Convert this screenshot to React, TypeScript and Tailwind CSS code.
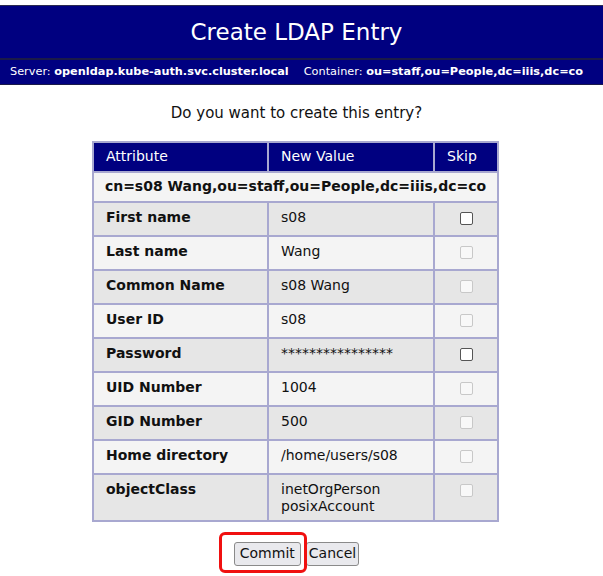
const rows = [
  { label: "First name", value: ["s08"], enabled: true },
  { label: "Last name", value: ["Wang"], enabled: false },
  { label: "Common Name", value: ["s08 Wang"], enabled: false },
  { label: "User ID", value: ["s08"], enabled: false },
  { label: "Password", value: ["****************"], enabled: true },
  { label: "UID Number", value: ["1004"], enabled: false },
  { label: "GID Number", value: ["500"], enabled: false },
  { label: "Home directory", value: ["/home/users/s08"], enabled: false },
  { label: "objectClass", value: ["inetOrgPerson", "posixAccount"], enabled: false },
];

function Check({ enabled }: { enabled: boolean }) {
  return (
    <span
      className={
        enabled
          ? "inline-block size-[13px] rounded-[2px] border border-[#555] bg-white"
          : "inline-block size-[13px] rounded-[2px] border border-[#c8c8c8] bg-[#f8f8f8]"
      }
    />
  );
}

export default function App() {
  return (
    <div className="min-h-[576px] bg-white pt-[5px] font-['DejaVu_Sans',sans-serif] text-[#111]">
      <div className="border-t border-[#2a2a50] bg-[#000080] text-white">
        <h1 className="flex h-[52px] items-center justify-center pr-[10px] text-[23px] font-normal">
          Create LDAP Entry
        </h1>
        <div className="flex h-[27px] items-center gap-[15px] whitespace-nowrap border-t-2 border-b border-[#1a1a48] px-[10px] text-[11.3px]">
          <span>
            Server: <b>openldap.kube-auth.svc.cluster.local</b>
          </span>
          <span>
            Container: <b>ou=staff,ou=People,dc=iiis,dc=co</b>
          </span>
        </div>
      </div>

      <div className="flex flex-col items-center pr-[12px]">
        <p className="mt-[17px] pl-[2px] text-[15px]">Do you want to create this entry?</p>

        <table className="mt-[16px] w-[407px] border-collapse border-2 border-[#a8a8d0] text-[14px]">
          <thead>
            <tr className="bg-[#000080] text-left text-white">
              <th className="h-[30px] w-[175px] border-2 border-[#a8a8d0] pl-[12px] font-normal">Attribute</th>
              <th className="w-[166px] border-2 border-[#a8a8d0] pl-[12px] font-normal">New Value</th>
              <th className="border-2 border-[#a8a8d0] pl-[12px] font-normal">Skip</th>
            </tr>
          </thead>
          <tbody>
            <tr className="bg-[#f4f4f4]">
              <td colSpan={3} className="h-[30px] border-2 border-[#a8a8d0] text-center font-bold">
                cn=s08 Wang,ou=staff,ou=People,dc=iiis,dc=co
              </td>
            </tr>
            {rows.map((r, i) => (
              <tr key={r.label} className={i % 2 === 0 ? "bg-[#e6e6e6]" : "bg-[#f4f4f4]"}>
                <td className="h-[34px] border-2 border-[#a8a8d0] px-[12px] pt-[6px] pb-[5px] align-top font-bold leading-[17px]">
                  {r.label}
                </td>
                <td className="border-2 border-[#a8a8d0] px-[12px] pt-[6px] pb-[5px] align-top leading-[17px]">
                  {r.value.map((v) => (
                    <div key={v}>{v}</div>
                  ))}
                </td>
                <td className="border-2 border-[#a8a8d0] pt-[9px] text-center align-top leading-[13px]">
                  <Check enabled={r.enabled} />
                </td>
              </tr>
            ))}
          </tbody>
        </table>

        <div className="relative mt-[20px] ml-[2px] flex gap-[5px]">
          <button className="h-[24px] rounded-[3px] border border-[#8a8a8a] bg-[#e9e9ed] px-[5px] text-[14px] text-[#111]">
            Commit
          </button>
          <button className="h-[24px] rounded-[3px] border border-[#8a8a8a] bg-[#e9e9ed] px-[2px] text-[14px] text-[#111]">
            Cancel
          </button>
          <span className="pointer-events-none absolute -top-[10px] -left-[15px] h-[41px] w-[88px] rounded-[6px] border-[3px] border-[#f01010]" />
        </div>
      </div>
    </div>
  );
}
